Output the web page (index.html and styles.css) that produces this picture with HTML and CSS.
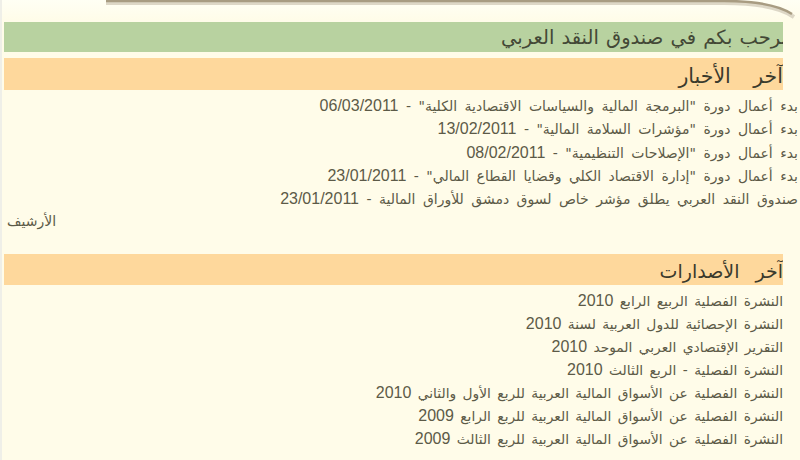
FILE: index.html
```html
<!DOCTYPE html>
<html lang="ar">
<head>
<meta charset="utf-8">
<link rel="stylesheet" href="styles.css">
</head>
<body>
<div class="page" dir="rtl">
  <svg class="frame-top" width="800" height="20" viewBox="0 0 800 20">
    <path d="M104 3 H722 Q772 3 792 17" fill="none" stroke="#ddd7c6" stroke-width="4"/>
    <path d="M104 1 H722 Q770 1 790 14" fill="none" stroke="#a89c82" stroke-width="2.5"/>
  </svg>
  <div class="welcome"><span class="clip">نرحب بكم في صندوق النقد العربي</span></div>

  <section class="block">
    <h2 class="head news-head">آخر الأخبار</h2>
    <ul class="list news">
      <li>بدء أعمال دورة "البرمجة المالية والسياسات الاقتصادية الكلية" - <span class="num">06/03/2011</span></li>
      <li>بدء أعمال دورة "مؤشرات السلامة المالية" - <span class="num">13/02/2011</span></li>
      <li>بدء أعمال دورة "الإصلاحات التنظيمية" - <span class="num">08/02/2011</span></li>
      <li>بدء أعمال دورة "إدارة الاقتصاد الكلي وقضايا القطاع المالي" - <span class="num">23/01/2011</span></li>
      <li>صندوق النقد العربي يطلق مؤشر خاص لسوق دمشق للأوراق المالية - <span class="num">23/01/2011</span></li>
    </ul>
    <div class="more"><a class="archive" href="#">الأرشيف</a></div>
  </section>

  <section class="block">
    <h2 class="head">آخر الأصدارات</h2>
    <ul class="list pubs">
      <li>النشرة الفصلية الربيع الرابع <span class="num">2010</span></li>
      <li>النشرة الإحصائية للدول العربية لسنة <span class="num">2010</span></li>
      <li>التقرير الإقتصادي العربي الموحد <span class="num">2010</span></li>
      <li>النشرة الفصلية - الربع الثالث <span class="num">2010</span></li>
      <li>النشرة الفصلية عن الأسواق المالية العربية للربع الأول والثاني <span class="num">2010</span></li>
      <li>النشرة الفصلية عن الأسواق المالية العربية للربع الرابع <span class="num">2009</span></li>
      <li>النشرة الفصلية عن الأسواق المالية العربية للربع الثالث <span class="num">2009</span></li>
    </ul>
  </section>
</div>
</body>
</html>
```

FILE: styles.css
```css
html, body {
  margin: 0;
  padding: 0;
  height: 100%;
  overflow: hidden;
}
body {
  background: #fffce9;
  font-family: "DejaVu Sans", sans-serif;
  color: #5c5a47;
}
.page {
  position: relative;
  box-sizing: border-box;
  width: 800px;
  height: 460px;
  padding: 22px 2px 0 2px;
  border-left: 2px solid #efefe8;
  background: linear-gradient(#fffff4, #fffce9 20px);
}
.frame-top {
  position: absolute;
  top: 0;
  left: 0;
}
.welcome {
  height: 30px;
  margin-right: 15px;
  background: #b8d2a0;
  color: #434836;
  font-size: 19.5px;
  line-height: 32px;
  word-spacing: 1px;
  overflow: hidden;
  white-space: nowrap;
}
.welcome .clip {
  display: inline-block;
  margin-right: -4px;
}
.block {
  margin-top: 6px;
}
.block + .block {
  margin-top: 21px;
}
.head {
  margin: 0 15px 0 0;
  height: 32px;
  padding: 0;
  background: #fed89c;
  color: #3a3a2c;
  font-size: 19px;
  font-weight: normal;
  line-height: 36px;
  word-spacing: 10px;
  overflow: hidden;
}
.news-head {
  font-size: 20.5px;
  word-spacing: 16px;
}
.block + .block .head {
  height: 31px;
  line-height: 34px;
}
.list {
  list-style: none;
  margin: 4px 0 0 0;
  padding: 0;
  font-size: 14px;
  word-spacing: 3px;
  white-space: nowrap;
}
.list li {
  height: 23.3px;
  line-height: 23.3px;
}
.pubs {
  margin-right: 15px;
  font-size: 13.8px;
  word-spacing: 2px;
}
.pubs li {
  height: 23px;
  line-height: 23px;
}
.num {
  font-family: "Liberation Sans", sans-serif;
  font-size: 16px;
  word-spacing: 0;
}
.more {
  height: 23px;
  text-align: left;
  font-size: 14px;
  line-height: 23px;
  padding-left: 3px;
}
.archive {
  color: #5c5a47;
  text-decoration: none;
}
```
